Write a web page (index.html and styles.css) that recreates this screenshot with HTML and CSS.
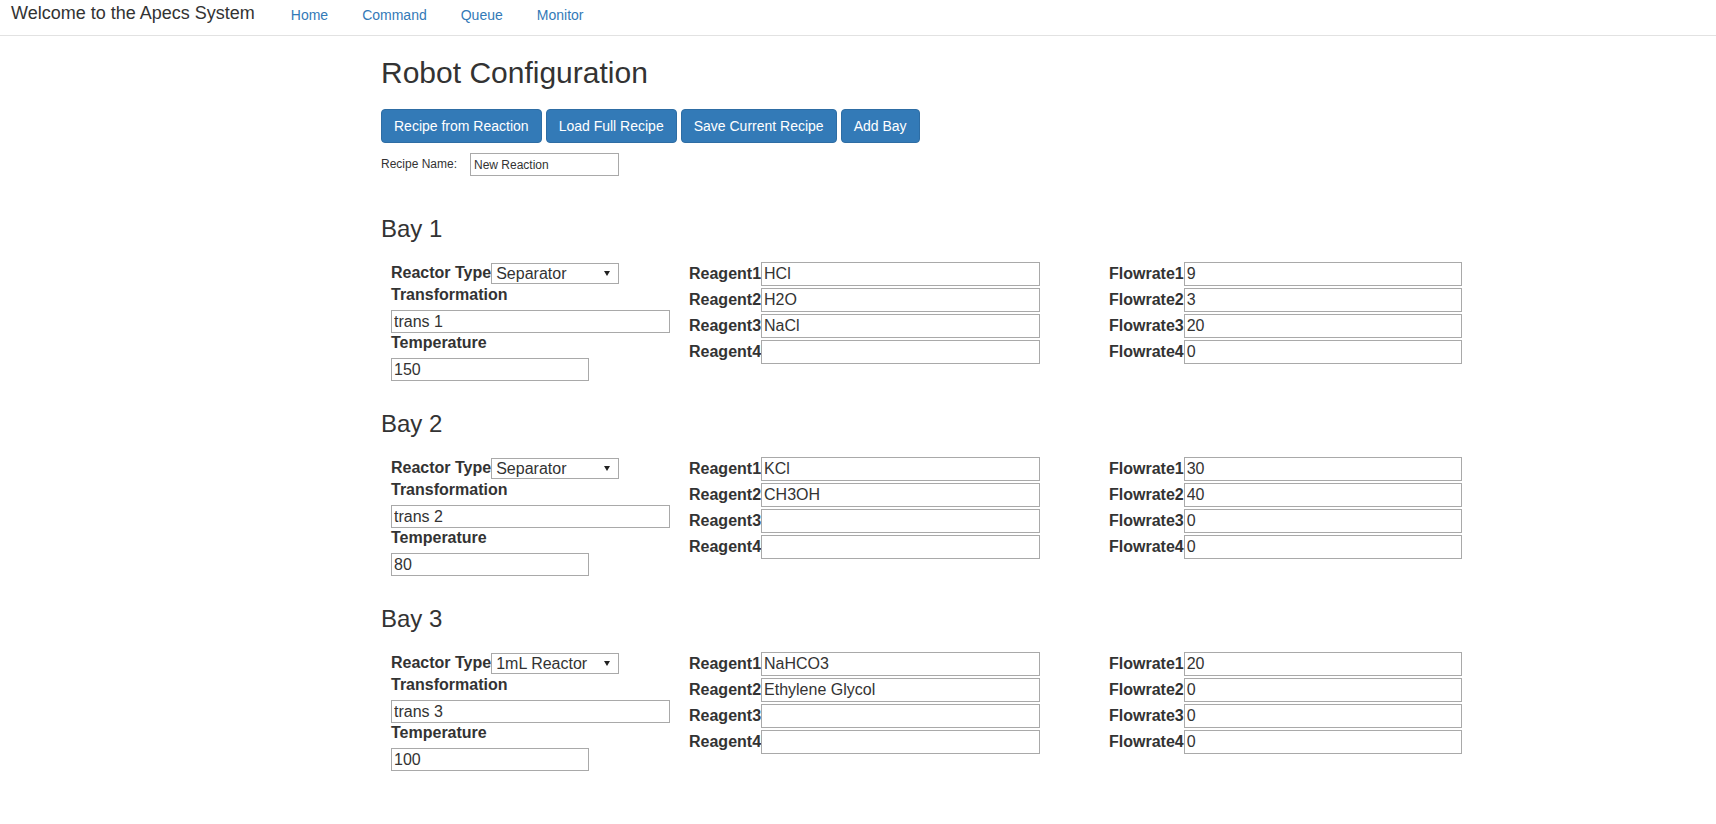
FILE: index.html
```html
<!DOCTYPE html>
<html lang="en">
<head>
<meta charset="utf-8">
<title>Apecs - Robot Configuration</title>
<link rel="stylesheet" href="styles.css">
</head>
<body>
<nav class="navbar">
  <a class="brand" href="#">Welcome to the Apecs System</a>
  <ul class="nav-links">
    <li><a href="#">Home</a></li>
    <li><a href="#">Command</a></li>
    <li><a href="#">Queue</a></li>
    <li><a href="#">Monitor</a></li>
  </ul>
</nav>

<main class="page">
  <h2 class="page-title">Robot Configuration</h2>
  <div class="toolbar">
    <button class="btn">Recipe from Reaction</button>
    <button class="btn">Load Full Recipe</button>
    <button class="btn">Save Current Recipe</button>
    <button class="btn">Add Bay</button>
  </div>
  <div class="recipe-row">
    <label class="recipe-label">Recipe Name:</label>
    <input class="recipe-input" type="text" value="New Reaction">
  </div>

  <section class="bay">
    <h3 class="bay-title">Bay 1</h3>
    <div class="bay-grid">
      <div class="col-main">
        <div class="reactor-row"><label class="lbl">Reactor Type</label><span class="select-wrap"><select class="select"><option>Separator</option></select></span></div>
        <label class="lbl block first">Transformation</label>
        <input class="field wide" type="text" value="trans 1">
        <label class="lbl block">Temperature</label>
        <input class="field narrow" type="text" value="150">
      </div>
      <div class="col-list">
        <div class="pair"><label class="lbl">Reagent1</label><input class="field list" type="text" value="HCl"></div>
        <div class="pair"><label class="lbl">Reagent2</label><input class="field list" type="text" value="H2O"></div>
        <div class="pair"><label class="lbl">Reagent3</label><input class="field list" type="text" value="NaCl"></div>
        <div class="pair"><label class="lbl">Reagent4</label><input class="field list" type="text" value=""></div>
      </div>
      <div class="col-list">
        <div class="pair"><label class="lbl">Flowrate1</label><input class="field flow" type="text" value="9"></div>
        <div class="pair"><label class="lbl">Flowrate2</label><input class="field flow" type="text" value="3"></div>
        <div class="pair"><label class="lbl">Flowrate3</label><input class="field flow" type="text" value="20"></div>
        <div class="pair"><label class="lbl">Flowrate4</label><input class="field flow" type="text" value="0"></div>
      </div>
    </div>
  </section>

  <section class="bay">
    <h3 class="bay-title">Bay 2</h3>
    <div class="bay-grid">
      <div class="col-main">
        <div class="reactor-row"><label class="lbl">Reactor Type</label><span class="select-wrap"><select class="select"><option>Separator</option></select></span></div>
        <label class="lbl block first">Transformation</label>
        <input class="field wide" type="text" value="trans 2">
        <label class="lbl block">Temperature</label>
        <input class="field narrow" type="text" value="80">
      </div>
      <div class="col-list">
        <div class="pair"><label class="lbl">Reagent1</label><input class="field list" type="text" value="KCl"></div>
        <div class="pair"><label class="lbl">Reagent2</label><input class="field list" type="text" value="CH3OH"></div>
        <div class="pair"><label class="lbl">Reagent3</label><input class="field list" type="text" value=""></div>
        <div class="pair"><label class="lbl">Reagent4</label><input class="field list" type="text" value=""></div>
      </div>
      <div class="col-list">
        <div class="pair"><label class="lbl">Flowrate1</label><input class="field flow" type="text" value="30"></div>
        <div class="pair"><label class="lbl">Flowrate2</label><input class="field flow" type="text" value="40"></div>
        <div class="pair"><label class="lbl">Flowrate3</label><input class="field flow" type="text" value="0"></div>
        <div class="pair"><label class="lbl">Flowrate4</label><input class="field flow" type="text" value="0"></div>
      </div>
    </div>
  </section>

  <section class="bay">
    <h3 class="bay-title">Bay 3</h3>
    <div class="bay-grid">
      <div class="col-main">
        <div class="reactor-row"><label class="lbl">Reactor Type</label><span class="select-wrap"><select class="select"><option>1mL Reactor</option></select></span></div>
        <label class="lbl block first">Transformation</label>
        <input class="field wide" type="text" value="trans 3">
        <label class="lbl block">Temperature</label>
        <input class="field narrow" type="text" value="100">
      </div>
      <div class="col-list">
        <div class="pair"><label class="lbl">Reagent1</label><input class="field list" type="text" value="NaHCO3"></div>
        <div class="pair"><label class="lbl">Reagent2</label><input class="field list" type="text" value="Ethylene Glycol"></div>
        <div class="pair"><label class="lbl">Reagent3</label><input class="field list" type="text" value=""></div>
        <div class="pair"><label class="lbl">Reagent4</label><input class="field list" type="text" value=""></div>
      </div>
      <div class="col-list">
        <div class="pair"><label class="lbl">Flowrate1</label><input class="field flow" type="text" value="20"></div>
        <div class="pair"><label class="lbl">Flowrate2</label><input class="field flow" type="text" value="0"></div>
        <div class="pair"><label class="lbl">Flowrate3</label><input class="field flow" type="text" value="0"></div>
        <div class="pair"><label class="lbl">Flowrate4</label><input class="field flow" type="text" value="0"></div>
      </div>
    </div>
  </section>
</main>
</body>
</html>
```

FILE: styles.css
```css
* { box-sizing: border-box; }

html, body {
  margin: 0;
  padding: 0;
  background: #fff;
}

body {
  font-family: "Liberation Sans", Arial, Helvetica, sans-serif;
  font-size: 14px;
  line-height: 1.42857;
  color: #333;
}

/* ---------- navbar ---------- */
.navbar {
  display: flex;
  align-items: flex-start;
  height: 36px;
  border-bottom: 1px solid #e2e2e2;
  background: #fff;
}

.brand {
  padding: 0 19px 0 11px;
  font-size: 18px;
  line-height: 26px;
  color: #333;
  text-decoration: none;
}

.nav-links {
  display: flex;
  margin: 0;
  padding: 0;
  list-style: none;
}

.nav-links a {
  display: block;
  padding: 0 17px;
  font-size: 14px;
  line-height: 30px;
  color: #337ab7;
  text-decoration: none;
}

/* ---------- page ---------- */
.page {
  padding: 0 0 40px 381px;
}

.page-title {
  margin: 20px 0 20px;
  font-size: 30px;
  font-weight: 500;
  line-height: 33px;
  color: #333;
}

.toolbar {
  display: flex;
  gap: 4px;
}

.btn {
  height: 34px;
  padding: 6px 12px;
  font-family: "Liberation Sans", Arial, Helvetica, sans-serif;
  font-size: 14px;
  line-height: 20px;
  color: #fff;
  background: #337ab7;
  border: 1px solid #2e6da4;
  border-radius: 4px;
  cursor: pointer;
}

.recipe-row {
  display: flex;
  align-items: center;
  margin: 10px 0 0;
}

.recipe-label {
  width: 89px;
  font-size: 12px;
}

.recipe-input {
  width: 149px;
  height: 23px;
  padding: 1px 3px;
  font-family: "Liberation Sans", Arial, Helvetica, sans-serif;
  font-size: 12px;
  color: #333;
  border: 1px solid #a9a9a9;
}

/* ---------- bays ---------- */
.bay-title {
  margin: 30px 0 20px;
  font-size: 24px;
  font-weight: 500;
  line-height: 26px;
  color: #333;
}

.recipe-row + .bay .bay-title {
  margin-top: 40px;
}

.bay-grid {
  display: grid;
  grid-template-columns: 298px 420px 360px;
  padding-left: 10px;
}

.col-main {
  display: flex;
  flex-direction: column;
  align-items: flex-start;
}

.lbl {
  font-size: 16px;
  font-weight: 700;
  color: #333;
  white-space: nowrap;
}

.lbl.block {
  display: block;
  line-height: 18px;
  margin: 1px 0 6px;
}

.lbl.block.first {
  margin-top: 2px;
}

.reactor-row {
  display: flex;
  align-items: center;
  height: 22px;
}

.select-wrap {
  position: relative;
  display: inline-block;
}

.select-wrap::after {
  content: "";
  position: absolute;
  right: 9px;
  top: 8px;
  border-left: 3.5px solid transparent;
  border-right: 3.5px solid transparent;
  border-top: 5px solid #222;
  pointer-events: none;
}

.select {
  -webkit-appearance: none;
  appearance: none;
  display: block;
  width: 128px;
  height: 21px;
  padding: 0 0 0 4px;
  font-family: "Liberation Sans", Arial, Helvetica, sans-serif;
  font-size: 16px;
  line-height: 19px;
  color: #333;
  background: #fff;
  border: 1px solid #a9a9a9;
  border-radius: 0;
}

.field {
  display: block;
  height: 24px;
  padding: 1px 2px;
  font-family: "Liberation Sans", Arial, Helvetica, sans-serif;
  font-size: 16px;
  color: #333;
  background: #fff;
  border: 1px solid #a9a9a9;
  border-radius: 0;
}

.field.wide { width: 279px; height: 23px; }
.field.narrow { width: 198px; height: 23px; }
.field.list { width: 279px; }
.field.flow { width: 278px; }

.col-list {
  display: flex;
  flex-direction: column;
  gap: 2px;
}

.pair {
  display: flex;
  align-items: center;
  height: 24px;
}
```
